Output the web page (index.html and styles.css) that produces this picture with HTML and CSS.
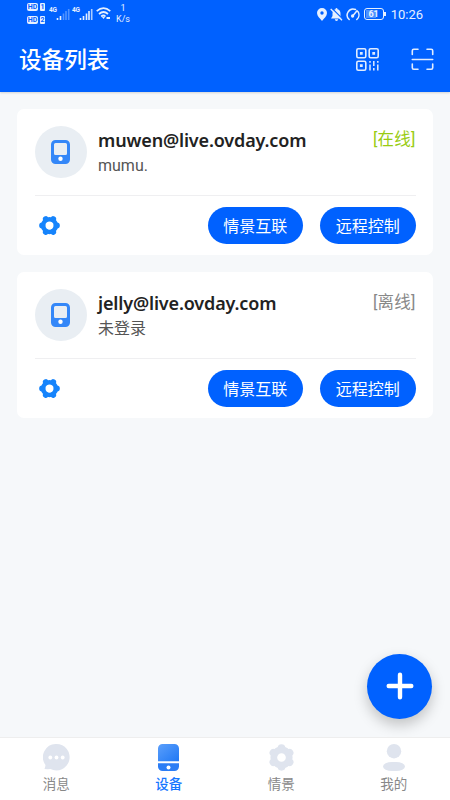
FILE: index.html
```html
<!DOCTYPE html>
<html lang="zh-CN">
<head>
  <meta charset="UTF-8" />
  <title>设备列表</title>
  <meta name="viewport" content="width=device-width, initial-scale=1.0" />
  <link rel="stylesheet" href="styles.css">
</head>
<body>
  <!-- 公用图标 -->
  <svg class="sprite" width="0" height="0">
    <symbol id="icon-phone" viewBox="0 0 19 24">
      <path fill="#3487f8" fill-rule="evenodd" d="M4.5 0h10A4.5 4.5 0 0 1 19 4.5v15a4.5 4.5 0 0 1-4.5 4.5h-10A4.5 4.5 0 0 1 0 19.5v-15A4.5 4.5 0 0 1 4.5 0zM4.500 3Q3 3 3 4.500V13.500Q3 15 4.500 15H14.500Q16 15 16 13.500V4.500Q16 3 14.500 3z"/>
      <circle cx="9.500" cy="18.800" r="2.200" fill="#fff"/>
    </symbol>
    <symbol id="icon-gear" viewBox="-14 -14 28 28">
      <g fill="none" stroke="currentColor" stroke-width="8" stroke-linecap="round">
        <path d="M0 -9.700V-9M0 9.700V9M8.400 -4.850L8 -4.600M-8.400 4.850L-8 4.600M-8.400 -4.850L-8 -4.600M8.400 4.850L8 4.600"/>
        <circle r="8" stroke-width="7"/>
      </g>
    </symbol>
    <symbol id="icon-setting" viewBox="-14 -14 28 28">
      <g fill="none" stroke="currentColor" stroke-width="7.800" stroke-linecap="round">
        <path d="M9.900 0H9.500M-9.900 0H-9.500M4.950 -8.570L4.800 -8.300M-4.950 8.570L-4.800 8.300M-4.950 -8.570L-4.800 -8.300M4.950 8.570L4.800 8.300"/>
        <circle r="8.500" stroke-width="6"/>
      </g>
    </symbol>
  </svg>

  <div class="app">
    <header class="header">
      <div class="status-bar">
        <div class="status-left">
          <div class="sims">
            <div class="sim"><span class="hd">HD</span><span class="slot">1</span></div>
            <div class="sim"><span class="hd">HD</span><span class="slot">2</span></div>
          </div>
          <div class="signal">
            <span class="net">4G</span>
            <svg width="14" height="13" viewBox="0 0 14 13" stroke="#e6f0ff" stroke-width="1.600">
              <path d="M1.500 13v-2M4.500 13v-4"/>
              <path d="M7.500 13v-6.500M10 13v-9M12.700 13v-11" opacity=".35"/>
            </svg>
          </div>
          <div class="signal">
            <span class="net">4G</span>
            <svg width="14" height="13" viewBox="0 0 14 13" stroke="#e6f0ff" stroke-width="1.600">
              <path d="M1.500 13v-2M4.500 13v-4M7.500 13v-6.500M10 13v-9"/>
              <path d="M12.700 13v-11" opacity=".75"/>
            </svg>
          </div>
          <svg class="wifi" width="15" height="13" viewBox="0 0 15 13" fill="none" stroke="#e6f0ff" stroke-width="1.700">
            <path d="M.7 4.200Q7.500-1.800 14.300 4.200M3 7Q7.500 3 12 7M5.200 9.500Q7.500 7.500 9.500 9.500"/>
            <path d="M6 10h3l-1.500 2z" fill="#e6f0ff" stroke="none"/>
            <path d="M10.500 11h3.500" stroke-width="2"/>
          </svg>
          <div class="speed"><span>1</span><span>K/s</span></div>
        </div>
        <div class="status-right">
          <svg width="10" height="13" viewBox="0 0 10 13">
            <path fill="#e6f0ff" fill-rule="evenodd" d="M5 0a5 5 0 0 1 5 5c0 3-3 5.500-5 8C3 10.500 0 8 0 5a5 5 0 0 1 5-5zM5 3.300a1.700 1.700 0 1 0 0 3.400 1.700 1.700 0 0 0 0-3.400z"/>
          </svg>
          <svg width="13" height="13" viewBox="0 0 13 13">
            <path fill="#e6f0ff" d="M6.500 0Q7.500 0 7.500 1.200Q10.500 2 10.500 5.500V8L12 10.500H1L2.500 8V5.500Q2.500 2 5.500 1.200Q5.500 0 6.500 0zM4.800 11.300h3.400Q8 13 6.500 13T4.800 11.300z"/>
            <path d="M1.700 0L13 11.300" stroke="#0061ff" stroke-width="1.200"/>
            <path d="M.7 1L12 12.300" stroke="#e6f0ff" stroke-width="1.300"/>
          </svg>
          <svg width="14" height="13" viewBox="0 0 14 13" fill="none" stroke="#e6f0ff" stroke-width="1.500" stroke-linecap="round">
            <path d="M3.200 11.500A6 6 0 0 1 9.500 1.500M12 3.700A6 6 0 0 1 10.800 11.500M6.700 8L11 2.700"/>
            <circle cx="6.600" cy="8" r=".9"/>
          </svg>
          <div class="battery"><span>61</span></div>
          <span class="time">10:26</span>
        </div>
      </div>
      <div class="title-bar">
        <h1>设备列表</h1>
        <div class="actions">
          <svg width="23" height="23" viewBox="0 0 23 23" fill="none" stroke="#e0ecff" stroke-width="1.600">
            <rect x=".8" y=".8" width="9" height="9" rx="1.500"/>
            <rect x="13.200" y=".8" width="9" height="9" rx="1.500"/>
            <rect x=".8" y="13.200" width="9" height="9" rx="1.500"/>
            <path d="M3.900 5.300h2.800M16.300 5.300h2.800M3.900 17.700h2.800" stroke-width="2.800"/>
            <path d="M14 13v1.800M14 16.500v6M17.800 13v5M17.800 20v2.500M21.800 13v1.800M21.800 16.500v6" stroke-width="1.500"/>
          </svg>
          <svg width="23" height="23" viewBox="0 0 23 23" fill="none" stroke="#e0ecff" stroke-width="1.600" stroke-linecap="round">
            <path d="M1.300 6.500V2.800Q1.300 1.300 2.800 1.300H7M16 1.300h4.200Q21.700 1.300 21.700 2.800V6.500M21.700 16v3.700Q21.700 21.200 20.200 21.200H16M7 21.200H2.800Q1.300 21.200 1.300 19.700V16M1.300 11.500h20.400"/>
          </svg>
        </div>
      </div>
    </header>

    <main class="list">
      <section class="card">
        <div class="info">
          <div class="avatar"><svg width="19" height="24"><use href="#icon-phone"/></svg></div>
          <div class="names">
            <h2 class="account">muwen@live.ovday.com</h2>
            <p class="remark">mumu.</p>
          </div>
          <span class="state online">[在线]</span>
        </div>
        <div class="ops">
          <svg class="setting" width="21" height="21"><use href="#icon-setting"/></svg>
          <button type="button">情景互联</button>
          <button type="button">远程控制</button>
        </div>
      </section>

      <section class="card">
        <div class="info">
          <div class="avatar"><svg width="19" height="24"><use href="#icon-phone"/></svg></div>
          <div class="names">
            <h2 class="account">jelly@live.ovday.com</h2>
            <p class="remark">未登录</p>
          </div>
          <span class="state">[离线]</span>
        </div>
        <div class="ops">
          <svg class="setting" width="21" height="21"><use href="#icon-setting"/></svg>
          <button type="button">情景互联</button>
          <button type="button">远程控制</button>
        </div>
      </section>
    </main>

    <button type="button" class="fab" aria-label="添加">
      <svg width="28" height="28" viewBox="0 0 28 28" stroke="#fff" stroke-width="4.400" stroke-linecap="round">
        <path d="M14 2.700v22.600M2.700 14h22.600"/>
      </svg>
    </button>

    <nav class="tabs">
      <a class="tab">
        <svg width="27" height="27" viewBox="0 0 27 27">
          <path fill="#dfe4ee" d="M13.500 0a13.200 13.200 0 1 1-6 25Q5 25.300 1.500 25Q2.500 22 2.500 21A13.200 13.200 0 0 1 13.500 0z"/>
          <g fill="#fff"><circle cx="7.300" cy="13.500" r="1.900"/><circle cx="13.500" cy="13.500" r="1.900"/><circle cx="19.700" cy="13.500" r="1.900"/></g>
        </svg>
        <span>消息</span>
      </a>
      <a class="tab active">
        <svg width="21" height="27" viewBox="0 0 21 27">
          <defs>
            <linearGradient id="blue" x1="0" y1="0" x2="1" y2="1">
              <stop offset="0" stop-color="#5b9ffb"/>
              <stop offset="1" stop-color="#1f78f5"/>
            </linearGradient>
          </defs>
          <path fill="url(#blue)" d="M4.500 0h12A4.500 4.500 0 0 1 21 4.500V17.300H0V4.500A4.500 4.500 0 0 1 4.500 0z"/>
          <path fill="#2b7df5" d="M0 19.200h21v3.300a4.500 4.500 0 0 1-4.500 4.500h-12A4.500 4.500 0 0 1 0 22.500z"/>
          <circle cx="10.500" cy="23.500" r="2" fill="#fff"/>
        </svg>
        <span>设备</span>
      </a>
      <a class="tab">
        <svg width="27" height="27"><use href="#icon-gear"/></svg>
        <span>情景</span>
      </a>
      <a class="tab">
        <svg width="22" height="27" viewBox="0 0 22 27" fill="#dfe4ee">
          <circle cx="11" cy="7.200" r="7.200"/>
          <rect y="18" width="22" height="9" rx="9" ry="4.500"/>
        </svg>
        <span>我的</span>
      </a>
    </nav>
  </div>
</body>
</html>
```

FILE: styles.css
```css
* {
  box-sizing: border-box;
}

body {
  margin: 0;
  font-family: Roboto, "Noto Sans CJK SC", sans-serif;
  background: #f6f8fa;
}

h1, h2, p {
  margin: 0;
}

svg {
  display: block;
  flex: none;
}

.sprite {
  position: absolute;
}

.app {
  display: flex;
  flex-direction: column;
  height: 100vh;
  min-height: 800px;
  position: relative;
}

/* 顶部 */
.header {
  height: 92px;
  background: #0061ff;
  color: #fff;
  box-shadow: 0 1px 2px rgba(0, 0, 0, 0.15);
}

.status-bar {
  display: flex;
  justify-content: space-between;
  height: 28px;
  padding: 0 27px;
  color: #e6f0ff;
}

.status-left,
.status-right {
  display: flex;
  align-items: center;
}

.status-left {
  height: 27px;
}

.sims {
  display: flex;
  flex-direction: column;
  gap: 5px;
}

.sim {
  display: flex;
  gap: 2px;
}

.hd,
.slot {
  height: 8px;
  border-radius: 2px;
  background: #e6f0ff;
  color: #0061ff;
  font-size: 7px;
  line-height: 8px;
  font-weight: bold;
  text-align: center;
}

.hd {
  width: 11px;
}

.slot {
  width: 5px;
  border-radius: 1px;
}

.signal {
  display: flex;
  align-items: flex-start;
  height: 13px;
  margin-left: 4px;
}

.signal + .signal {
  margin-left: 2px;
}

.net {
  width: 7px;
  font-size: 6.5px;
  line-height: 7px;
  font-weight: bold;
  letter-spacing: -0.3px;
}

.wifi {
  margin-left: 3px;
}

.speed {
  display: flex;
  flex-direction: column;
  margin-left: 5px;
  font-size: 9px;
  line-height: 11px;
  text-align: center;
}

.status-right {
  gap: 3px;
}

.battery {
  position: relative;
  width: 20px;
  height: 12px;
  margin: 0 3px 0 1px;
  padding: 1px;
  border: 1px solid #e6f0ff;
  border-radius: 3px;
}

.battery span {
  display: block;
  width: 16px;
  height: 8px;
  background: linear-gradient(90deg, #4d91ff 65%, transparent 65%);
  font-size: 9px;
  line-height: 9px;
  font-weight: bold;
  text-align: center;
}

.battery::after {
  content: "";
  position: absolute;
  top: 3px;
  right: -3px;
  width: 1.5px;
  height: 4px;
  background: #e6f0ff;
}

.time {
  margin-left: 1px;
  font-size: 13px;
}

.title-bar {
  display: flex;
  align-items: center;
  justify-content: space-between;
  height: 63px;
  padding: 0 16px 0 19px;
}

.title-bar h1 {
  padding-top: 2px;
  font-size: 22.6px;
  line-height: 32px;
  font-weight: 500;
}

.actions {
  display: flex;
  gap: 32px;
}

/* 设备列表 */
.list {
  flex: 1;
  padding: 17px 17px 0;
}

.card {
  height: 146px;
  margin-bottom: 17px;
  padding: 17px 17.5px 0;
  border-radius: 7px;
  background: #fff;
}

.info {
  display: flex;
  height: 70px;
  border-bottom: 1px solid #efeff1;
}

.avatar {
  display: flex;
  align-items: center;
  justify-content: center;
  width: 52px;
  height: 52px;
  border-radius: 50%;
  background: #e9eef3;
}

.names {
  flex: 1;
  padding: 2px 0 0 11.5px;
}

.account {
  font-family: "Noto Sans", sans-serif;
  font-size: 18px;
  line-height: 25px;
  font-weight: 600;
  letter-spacing: -0.15px;
  color: #222;
}

.remark {
  font-size: 16px;
  line-height: 25px;
  color: #555;
}

.state {
  padding-top: 2px;
  font-size: 16.5px;
  line-height: 24px;
  letter-spacing: 0.2px;
  color: #888;
}

.state.online {
  color: #99cc11;
}

.ops {
  display: flex;
  align-items: center;
  gap: 17px;
  padding-top: 11px;
}

.setting {
  margin: 0 auto 0 4px;
  color: #1684fc;
}

.ops button {
  width: 95.5px;
  height: 37px;
  padding: 0 0 2px;
  border: none;
  border-radius: 19px;
  background: #0061ff;
  color: #fff;
  font-family: inherit;
  font-size: 16px;
}

/* 悬浮按钮 */
.fab {
  position: absolute;
  right: 18px;
  bottom: 81.5px;
  display: flex;
  align-items: center;
  justify-content: center;
  width: 65px;
  height: 65px;
  padding: 0;
  border: none;
  border-radius: 50%;
  background: #0061ff;
  box-shadow: 0 6px 14px rgba(0, 0, 0, 0.22);
}

/* 底部导航 */
.tabs {
  display: grid;
  grid-template-columns: repeat(4, 1fr);
  height: 63px;
  border-top: 1px solid #eee;
  background: #fff;
  position: relative;
}

.tab {
  display: flex;
  flex-direction: column;
  align-items: center;
  padding-top: 6px;
  color: #dfe4ee;
}

.tab span {
  margin-top: 3px;
  font-size: 13.5px;
  line-height: 20px;
  color: #888;
}

.tab.active span {
  color: #1677ff;
  font-weight: 500;
}
```
